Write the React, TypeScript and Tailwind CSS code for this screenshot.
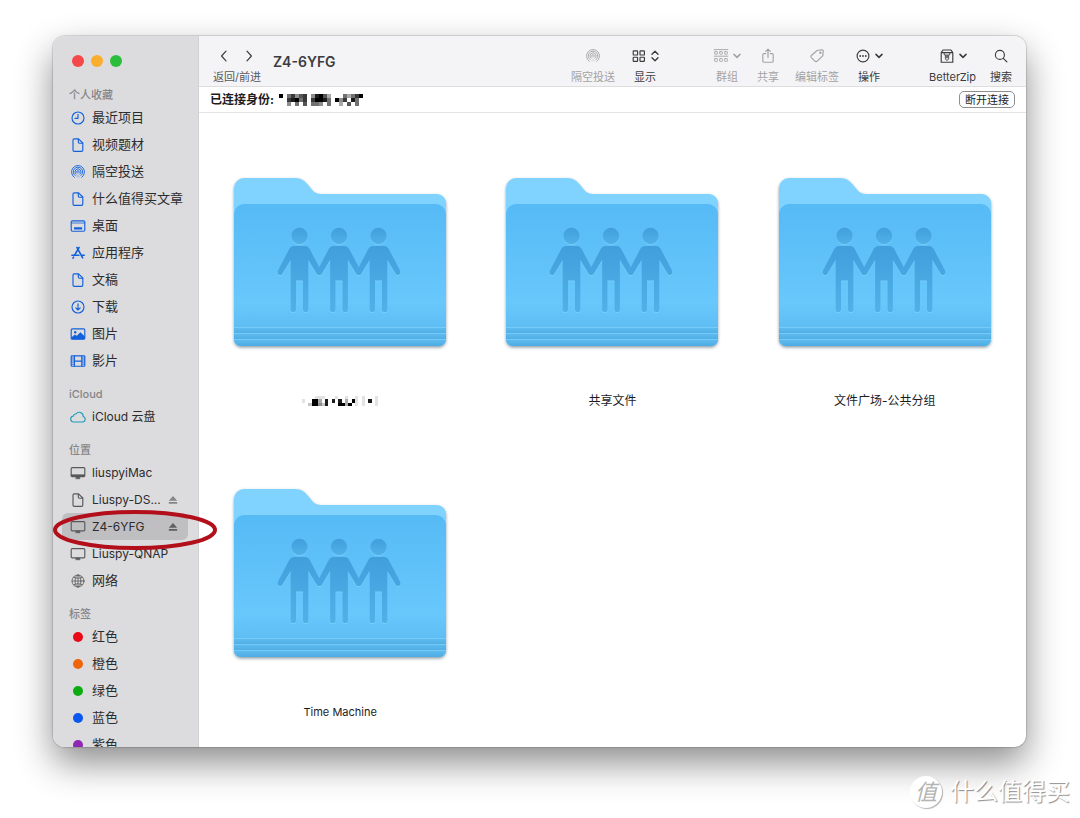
import type { ReactNode } from 'react';

type IconProps = { className?: string };

function Icon({ className = '', children }: { className?: string; children: ReactNode }) {
  return (
    <svg
      viewBox="0 0 16 16"
      fill="none"
      stroke="currentColor"
      strokeWidth="1.15"
      strokeLinecap="round"
      strokeLinejoin="round"
      aria-hidden="true"
      className={`w-4 h-4 shrink-0 ${className}`}
    >
      {children}
    </svg>
  );
}

const ClockIcon = (p: IconProps) => (
  <Icon {...p}>
    <circle cx="8" cy="8" r="6" />
    <path d="M8 4.2V8.3H5" />
  </Icon>
);

const DocIcon = (p: IconProps) => (
  <Icon {...p}>
    <path d="M4.2 1.8h4.3l4.3 4.2v7a1.3 1.3 0 0 1-1.3 1.3H4.3A1.3 1.3 0 0 1 3 13V3a1.2 1.2 0 0 1 1.200-1.200Z" />
    <path d="M8.300 2v3.100a1.100 1.100 0 0 0 1.100 1.100h3.200" />
  </Icon>
);

const AirdropIcon = (p: IconProps) => (
  <Icon {...p}>
    <g strokeWidth="0.9">
      <path d="M4.300 13.400a6.500 6.500 0 1 1 7.400 0" />
      <path d="M5.100 11.600a4.700 4.700 0 1 1 5.800 0" />
      <path d="M6 10.100a3 3 0 1 1 4 0" />
      <path d="M7.100 8.900a1.300 1.300 0 1 1 1.800 0" />
    </g>
    <path d="M8 9.400 5.800 13.600h4.400Z" fill="currentColor" stroke="none" opacity="0.2" />
  </Icon>
);

const DesktopIcon = (p: IconProps) => (
  <Icon {...p}>
    <rect x="1.2" y="2.800" width="13.600" height="10.400" rx="1.200" />
    <path d="M1.600 5h13" strokeWidth="0.8" />
    <rect x="4" y="9.200" width="8.200" height="2.400" rx="0.4" fill="currentColor" stroke="none" />
  </Icon>
);

const AppsIcon = (p: IconProps) => (
  <Icon {...p}>
    <g strokeWidth="1.6">
      <path d="M7 2.500 8 4.300l4.600 8.600" />
      <path d="M9 2.500 4.600 10.200" />
      <path d="M3.600 12.200 3 13.200" />
      <path d="M1.900 10.300h7M11.800 10.300h2.400" />
    </g>
  </Icon>
);

const DownloadIcon = (p: IconProps) => (
  <Icon {...p}>
    <circle cx="8" cy="8" r="6" />
    <path d="M8 4.800v6M5.800 8.800 8 11l2.200-2.200" />
  </Icon>
);

const PictureIcon = (p: IconProps) => (
  <Icon {...p}>
    <rect x="1.200" y="2.800" width="13.600" height="10.400" rx="1.200" />
    <circle cx="5.200" cy="6.300" r="1.200" fill="currentColor" stroke="none" />
    <path d="M1.600 11.600 5 8.700l1.700 1.400L10.400 6.600l4.200 4v2.500H1.600Z" fill="currentColor" strokeWidth="0.5" />
  </Icon>
);

const FilmIcon = (p: IconProps) => (
  <Icon {...p}>
    <rect x="1.200" y="2.800" width="13.600" height="10.400" rx="0.8" />
    <path d="M4.400 3v10.200M11.800 3v10.200M4.400 8.100h7.400" />
    <path d="M1.600 5h2.600M1.600 7h2.600M1.600 9.100h2.600M1.600 11.200h2.600M12 5h2.600M12 7h2.600M12 9.100h2.600M12 11.200h2.600" strokeWidth="0.8" />
  </Icon>
);

const CloudIcon = (p: IconProps) => (
  <Icon {...p}>
    <path d="M4 13a3 3 0 0 1-.5-6 2.100 2.100 0 0 1 2.500-2 3.900 3.900 0 0 1 7.100 2.500A2.800 2.800 0 0 1 12.500 13Z" />
  </Icon>
);

const ImacIcon = (p: IconProps) => (
  <Icon {...p}>
    <rect x="1.200" y="2.600" width="13.600" height="9" rx="1" />
    <path d="M1.400 9.600h13.200v1.800H1.400Z" fill="currentColor" strokeWidth="0.4" />
    <path d="M6.400 11.800h3.200l.4 2H6Z" fill="currentColor" strokeWidth="0.5" />
  </Icon>
);

const DisplayIcon = (p: IconProps) => (
  <Icon {...p}>
    <rect x="1.200" y="2.600" width="13.600" height="9.200" rx="1" />
    <path d="M6.400 12h3.200l.5 1.800H5.900Z" fill="currentColor" strokeWidth="0.5" />
  </Icon>
);

const GlobeIcon = (p: IconProps) => (
  <Icon {...p}>
    <g strokeWidth="0.8">
      <circle cx="8" cy="8" r="6" />
      <ellipse cx="8" cy="8" rx="2.900" ry="6" />
      <path d="M2.100 8h11.800M8 2v12M3.600 4.300c2.600 1.300 6.200 1.300 8.800 0M3.600 11.700c2.600-1.300 6.200-1.300 8.800 0" />
    </g>
  </Icon>
);

const EjectIcon = (p: IconProps) => (
  <svg viewBox="0 0 10 10" fill="currentColor" aria-hidden="true" className={`w-[10px] h-[10px] shrink-0 ${p.className ?? ''}`}>
    <path d="M5 1 9.200 5.800H.8Z" />
    <rect x="0.8" y="7" width="8.400" height="1.800" rx="0.3" />
  </svg>
);

const ChevronDown = () => (
  <svg viewBox="0 0 8 6" fill="none" stroke="currentColor" strokeWidth="1.5" strokeLinecap="round" strokeLinejoin="round" aria-hidden="true" className="w-2 h-[6px]">
    <path d="m1 1.400 3 3 3-3" />
  </svg>
);

const UpDown = () => (
  <svg viewBox="0 0 8 12" fill="none" stroke="currentColor" strokeWidth="1.4" strokeLinecap="round" strokeLinejoin="round" aria-hidden="true" className="w-2 h-3">
    <path d="m1 4.200 3-3 3 3M1 7.800l3 3 3-3" />
  </svg>
);

const GridIcon = () => (
  <Icon>
    <rect x="2.200" y="2.800" width="4.400" height="4.200" rx="0.6" />
    <rect x="9" y="2.800" width="4.400" height="4.200" rx="0.6" />
    <rect x="2.200" y="9.200" width="4.400" height="4.200" rx="0.6" />
    <rect x="9" y="9.200" width="4.400" height="4.200" rx="0.6" />
  </Icon>
);

const GroupIcon = () => (
  <Icon>
    <g strokeWidth="0.9">
      <path d="M1.200 1.600h13.600M1.200 8.200h13.600" />
      <rect x="1.600" y="3.600" width="2.800" height="2.600" rx="0.6" />
      <rect x="6.600" y="3.600" width="2.800" height="2.600" rx="0.6" />
      <rect x="11.600" y="3.600" width="2.800" height="2.600" rx="0.6" />
      <rect x="1.600" y="10.600" width="2.800" height="2.800" rx="0.6" />
      <rect x="6.600" y="10.600" width="2.800" height="2.800" rx="0.6" />
      <rect x="11.600" y="10.600" width="2.800" height="2.800" rx="0.6" />
    </g>
  </Icon>
);

const ShareIcon = () => (
  <Icon>
    <path d="M5.800 5.600H3.900a1.100 1.100 0 0 0-1.100 1.100v6.400a1.100 1.100 0 0 0 1.100 1.100h8.200a1.100 1.100 0 0 0 1.100-1.100V6.700a1.100 1.100 0 0 0-1.100-1.100h-1.900" />
    <path d="M8 9.600V1.200M5.700 3.400 8 1.100l2.300 2.300" />
  </Icon>
);

const TagIcon = () => (
  <Icon>
    <path d="M8.900 2.300 13 1.900a1.100 1.100 0 0 1 1.200 1.200l-.3 4a1.600 1.600 0 0 1-.5 1l-5.200 5.100a1.600 1.600 0 0 1-2.300 0L2.300 9.700a1.600 1.600 0 0 1 0-2.200l5.500-4.700a1.800 1.800 0 0 1 1.100-.5Z" />
    <circle cx="11.400" cy="4.700" r="0.6" />
  </Icon>
);

const MoreIcon = () => (
  <Icon>
    <circle cx="8" cy="8" r="5.900" />
    <g fill="currentColor" stroke="none">
      <circle cx="5.200" cy="8" r="0.9" />
      <circle cx="8" cy="8" r="0.9" />
      <circle cx="10.800" cy="8" r="0.9" />
    </g>
  </Icon>
);

const ZipIcon = () => (
  <Icon>
    <path d="M2.200 4.600h11.600v9.600H2.200ZM2.200 4.600l1.800-2.600h8l1.800 2.600" />
    <path d="M5.200 4.800v2h1.200v4l1 1.400h1.200l1-1.400v-4h1.200v-2" strokeWidth="0.9" />
    <rect x="7.300" y="6.400" width="1.400" height="3.800" fill="currentColor" stroke="none" />
  </Icon>
);

const SearchIcon = () => (
  <Icon>
    <circle cx="6.900" cy="6.900" r="4.500" />
    <path d="m10.300 10.300 3.600 3.600" />
  </Icon>
);

const FAVORITES = [
  { label: '最近项目', icon: ClockIcon },
  { label: '视频题材', icon: DocIcon },
  { label: '隔空投送', icon: AirdropIcon },
  { label: '什么值得买文章', icon: DocIcon },
  { label: '桌面', icon: DesktopIcon },
  { label: '应用程序', icon: AppsIcon },
  { label: '文稿', icon: DocIcon },
  { label: '下载', icon: DownloadIcon },
  { label: '图片', icon: PictureIcon },
  { label: '影片', icon: FilmIcon },
];

const LOCATIONS = [
  { label: 'liuspyiMac', icon: ImacIcon, latin: true },
  { label: 'Liuspy-DS...', icon: DocIcon, latin: true, eject: true },
  { label: 'Z4-6YFG', icon: DisplayIcon, latin: true, eject: true, active: true },
  { label: 'Liuspy-QNAP', icon: DisplayIcon, latin: true },
  { label: '网络', icon: GlobeIcon },
];

const TAGS = [
  { label: '红色', cls: 'bg-[#ea0a17]' },
  { label: '橙色', cls: 'bg-[#ef650c]' },
  { label: '绿色', cls: 'bg-[#0cab11]' },
  { label: '蓝色', cls: 'bg-[#0a57f0]' },
  { label: '紫色', cls: 'bg-[#8f26b4]' },
];

// one digit per block of the censored name, 0 = white, 9 = black
const USER_MOSAIC = [
  '905746704896300053579',
  '007895707998509470850',
  '004050605540500306050',
];

const FOLDER_MOSAIC = [
  '00001110001001001010001',
  '10099308080803091010801',
  '00299428000993901010001',
];

function Mosaic({ rows, label, className }: { rows: string[]; label: string; className: string }) {
  return (
    <svg
      viewBox={`0 0 ${rows[0].length} ${rows.length}`}
      role="img"
      aria-label={label}
      shapeRendering="crispEdges"
      className={className}
    >
      {rows.map((row, y) =>
        row.split('').map((v, x) =>
          v === '0' ? null : (
            <rect key={`${x}-${y}`} x={x} y={y} width="1" height="1" fill="#000" opacity={Number(v) / 9} />
          ),
        ),
      )}
    </svg>
  );
}

function Section({ title, children }: { title: string; children: ReactNode }) {
  return (
    <section className="mb-3">
      <h2 className="h-[17px] pl-[7px] text-[11px] leading-[17px] font-medium text-[#858588]">{title}</h2>
      <ul>{children}</ul>
    </section>
  );
}

function SidebarItem({
  label,
  icon,
  latin,
  eject,
  active,
}: {
  label: string;
  icon: ReactNode;
  latin?: boolean;
  eject?: boolean;
  active?: boolean;
}) {
  return (
    <li className="relative">
      <a
        href="#"
        aria-current={active ? 'page' : undefined}
        className={`flex items-center gap-[6px] h-[27px] pl-2 pr-[10px] rounded-md text-[#2c2c2e] whitespace-nowrap ${
          latin ? 'text-[12px]' : 'text-[13px]'
        } ${active ? 'bg-[#bfbfc1]' : ''}`}
      >
        {icon}
        <span className="flex-1">{label}</span>
        {eject && <EjectIcon className={active ? 'text-[#5f5f61]' : 'text-[#858587]'} />}
      </a>
      {active && (
        <svg viewBox="0 0 166 42" aria-hidden="true" className="absolute z-10 -left-[10px] -top-1 w-[166px] h-[42px] max-w-none">
          <ellipse cx="83" cy="21" rx="80" ry="18" fill="none" stroke="#b20f1b" strokeWidth="4" />
        </svg>
      )}
    </li>
  );
}

function Sidebar() {
  return (
    <nav className="w-[146px] shrink-0 bg-[#dcdcde] border-r border-[#d2d2d4] pl-[9px] pr-[10px]">
      <div className="flex gap-[7px] pt-[19px] pb-5 pl-[10px]">
        <button aria-label="关闭" className="w-3 h-3 rounded-full bg-[#f4484a]" />
        <button aria-label="最小化" className="w-3 h-3 rounded-full bg-[#f9ae2e]" />
        <button aria-label="缩放" className="w-3 h-3 rounded-full bg-[#2bbe3b]" />
      </div>

      <Section title="个人收藏">
        {FAVORITES.map((f) => (
          <SidebarItem key={f.label} label={f.label} icon={<f.icon className="text-[#1360dc]" />} />
        ))}
      </Section>
      <Section title="iCloud">
        <SidebarItem label="iCloud 云盘" latin icon={<CloudIcon className="text-[#1a9cb8]" />} />
      </Section>
      <Section title="位置">
        {LOCATIONS.map((l) => (
          <SidebarItem
            key={l.label}
            label={l.label}
            icon={<l.icon className="text-[#59595b]" />}
            latin={l.latin}
            eject={l.eject}
            active={l.active}
          />
        ))}
      </Section>
      <Section title="标签">
        {TAGS.map((t) => (
          <SidebarItem
            key={t.label}
            label={t.label}
            icon={
              <span className="w-4 flex justify-center">
                <span className={`w-[10px] h-[10px] rounded-full ${t.cls}`} />
              </span>
            }
          />
        ))}
      </Section>
    </nav>
  );
}

function ToolButton({ label, disabled, children }: { label: string; disabled?: boolean; children: ReactNode }) {
  return (
    <button
      disabled={disabled}
      className={`flex flex-col items-center gap-[3px] whitespace-nowrap ${disabled ? 'text-[#a3a3a5]' : 'text-[#3c3c3e]'}`}
    >
      <span className="h-5 flex items-center gap-1">{children}</span>
      <span className="text-[11px] leading-4">{label}</span>
    </button>
  );
}

function Toolbar() {
  return (
    <header className="flex h-[51px] pt-[10px] px-[14px] bg-[#f4f4f6] border-b border-[#dddddf]">
      <div className="flex flex-col items-center gap-[3px] text-[#3c3c3e]">
        <div className="h-5 flex items-center gap-[9px]">
          <button aria-label="返回">
            <Icon>
              <path d="M10 3.200 5.600 8l4.400 4.800" strokeWidth="1.2" />
            </Icon>
          </button>
          <button aria-label="前进">
            <Icon>
              <path d="m6 3.200 4.400 4.800L6 12.800" strokeWidth="1.2" />
            </Icon>
          </button>
        </div>
        <span className="text-[11px] leading-4 text-[#58585a] whitespace-nowrap">返回/前进</span>
      </div>
      <h1 className="ml-3 mt-[6px] text-[14px] leading-5 font-semibold text-[#3c3c3e]">Z4-6YFG</h1>

      <div className="ml-auto flex items-start">
        <div className="flex gap-4">
          <ToolButton label="隔空投送" disabled>
            <AirdropIcon />
          </ToolButton>
          <ToolButton label="显示">
            <GridIcon />
            <UpDown />
          </ToolButton>
        </div>
        <div className="ml-[54px] mr-[46px] flex gap-4">
          <ToolButton label="群组" disabled>
            <GroupIcon />
            <ChevronDown />
          </ToolButton>
          <ToolButton label="共享" disabled>
            <ShareIcon />
          </ToolButton>
          <ToolButton label="编辑标签" disabled>
            <TagIcon />
          </ToolButton>
          <ToolButton label="操作">
            <MoreIcon />
            <ChevronDown />
          </ToolButton>
        </div>
        <div className="flex gap-[14px]">
          <ToolButton label="BetterZip">
            <ZipIcon />
            <ChevronDown />
          </ToolButton>
          <ToolButton label="搜索">
            <SearchIcon />
          </ToolButton>
        </div>
      </div>
    </header>
  );
}

function FolderArt() {
  return (
    <svg viewBox="0 0 224 180" aria-hidden="true" className="w-[224px] h-[180px]">
      <defs>
        <linearGradient id="front" x1="0" y1="0" x2="0" y2="1">
          <stop offset="0" stopColor="#56baf5" />
          <stop offset="0.7" stopColor="#68c8fc" />
          <stop offset="0.84" stopColor="#60c0f5" />
          <stop offset="1" stopColor="#54b0e6" />
        </linearGradient>
        <linearGradient id="people" x1="0" y1="0" x2="0" y2="1">
          <stop offset="0" stopColor="#419fdc" />
          <stop offset="1" stopColor="#50b1e8" />
        </linearGradient>
        <linearGradient id="fold" x1="0" y1="0" x2="0" y2="1">
          <stop offset="0" stopColor="#62bff2" />
          <stop offset="1" stopColor="#4dabe2" />
        </linearGradient>
        <filter id="drop" x="-5%" y="-5%" width="110%" height="112%">
          <feDropShadow dx="0" dy="1.5" stdDeviation="1.6" floodColor="#2a4a5c" floodOpacity="0.55" />
        </filter>
        <clipPath id="frontClip">
          <rect x="6" y="30" width="212" height="142" rx="7" />
        </clipPath>
        <g id="person">
          <circle cx="0" cy="62" r="8.200" />
          <path d="M-6 72H6Q8.600 72 10 74.500L21.500 96.500Q22.600 99.500 20.500 100.800Q18.300 101.800 17 99.600L8.900 86V135.400A2.600 2.600 0 0 1 3.500 135.400V106.500H-3.500V135.400A2.600 2.600 0 0 1-8.900 135.400V86L-17 99.600Q-18.300 101.800-20.500 100.800Q-22.600 99.500-21.500 96.500L-10 74.500Q-8.600 72-6 72Z" />
        </g>
      </defs>
      <g filter="url(#drop)">
        <path
          d="M6 14A10 10 0 0 1 16 4H67C74 4 77 7 81 12C85 17 87 20 94 20H209A9 9 0 0 1 218 29V165A7 7 0 0 1 211 172H13A7 7 0 0 1 6 165Z"
          fill="#80d3ff"
        />
      </g>
      <path d="M6 40A10 10 0 0 1 16 30H208A10 10 0 0 1 218 40V165A7 7 0 0 1 211 172H13A7 7 0 0 1 6 165Z" fill="url(#front)" />
      <g clipPath="url(#frontClip)" opacity="0.75">
        <rect x="6" y="153" width="212" height="6" fill="url(#fold)" />
        <rect x="6" y="159" width="212" height="6" fill="url(#fold)" />
        <rect x="6" y="165" width="212" height="7" fill="url(#fold)" />
        <path d="M6 153.500H218M6 159.500H218M6 165.500H218" stroke="#7fd0fa" strokeWidth="1" />
      </g>
      <g fill="#86d4fd" opacity="0.6">
        <use href="#person" x="71.500" y="1" />
        <use href="#person" x="111" y="1" />
        <use href="#person" x="150.500" y="1" />
      </g>
      <g fill="url(#people)">
        <use href="#person" x="71.500" />
        <use href="#person" x="111" />
        <use href="#person" x="150.500" />
      </g>
    </svg>
  );
}

function Folder({ latin, children }: { latin?: boolean; children: ReactNode }) {
  return (
    <a href="#" className="flex flex-col items-center gap-[37px]">
      <FolderArt />
      <span className={`h-5 flex items-center leading-5 text-[#1c1c1e] ${latin ? 'text-[11px]' : 'text-[12px]'}`}>
        {children}
      </span>
    </a>
  );
}

export default function App() {
  return (
    <div className="relative h-screen overflow-hidden bg-white flex pl-[53px] pr-[54px] pt-9 pb-[71px] font-[Inter,'Noto_Sans_CJK_SC',sans-serif]">
      <div className="flex flex-1 min-w-0 overflow-hidden rounded-xl bg-white shadow-[0_0_1px_1px_rgba(0,0,0,0.14),0_16px_36px_rgba(0,0,0,0.45)]">
        <Sidebar />
        <main className="flex-1 min-w-0">
          <Toolbar />
          <div className="flex items-center h-[26px] px-[11px] border-b border-[#e4e4e6]">
            <span className="text-[12px] font-bold text-[#1c1c1e]">已连接身份:</span>
            <span className="ml-[5px]">
              <Mosaic rows={USER_MOSAIC} label="用户名" className="w-[84px] h-3" />
            </span>
            <button className="ml-auto h-[17px] px-[5px] rounded-[5px] border border-[#8e8e90] text-[11px] leading-[14px] text-[#1c1c1e]">
              断开连接
            </button>
          </div>
          <div className="grid grid-cols-3 gap-y-[74px] px-[5px] pt-[61px]">
            <Folder>
              <Mosaic rows={FOLDER_MOSAIC} label="文件夹" className="w-[78px] h-[10px]" />
            </Folder>
            <Folder>共享文件</Folder>
            <Folder>文件广场-公共分组</Folder>
            <Folder latin>Time Machine</Folder>
          </div>
        </main>
      </div>

      <div className="absolute right-[10px] bottom-[10px] flex items-center gap-2 text-white">
        <span className="flex items-center justify-center w-8 h-8 rounded-full bg-white text-[22px] italic text-[#b4b4b4] shadow-[1px_1px_1px_rgba(0,0,0,0.3)]">
          值
        </span>
        <span className="text-[24px] leading-8 [text-shadow:1px_1px_1px_rgba(0,0,0,0.45)]">什么值得买</span>
      </div>
    </div>
  );
}
